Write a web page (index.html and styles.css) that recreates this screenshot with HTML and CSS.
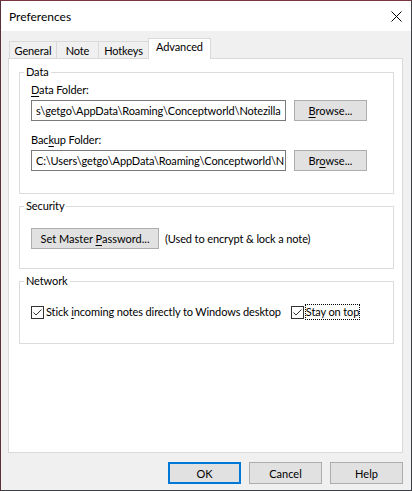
FILE: index.html
```html
<!DOCTYPE html>
<html>
<head>
  <meta charset="UTF-8" />
  <meta name="viewport" content="width=device-width, initial-scale=1" />
  <title>Preferences</title>
  <link rel="stylesheet" href="styles.css">
</head>
<body>
  <div class="window">
    <div class="titlebar">
      <span class="title">Preferences</span>
      <button class="close" title="Close">
        <svg width="11" height="11" viewBox="0 0 11 11">
          <path d="M0.5 0.5 L10.5 10.5 M10.5 0.5 L0.5 10.5" stroke="#000" stroke-width="1" fill="none" />
        </svg>
      </button>
    </div>

    <div class="client">
      <div class="tabs">
        <div class="tab" style="width: 48px">General</div>
        <div class="tab" style="width: 43px">Note</div>
        <div class="tab" style="width: 51px">Hotkeys</div>
        <div class="tab active" style="width: 63px">Advanced</div>
      </div>

      <div class="panel">
        <fieldset class="group data">
          <legend>Data</legend>
          <label class="field-label"><u>D</u>ata Folder:</label>
          <div class="row">
            <div class="field">s\getgo\AppData\Roaming\Conceptworld\Notezilla</div>
            <button class="btn"><u>B</u>rowse...</button>
          </div>
          <label class="field-label second">Bac<u>k</u>up Folder:</label>
          <div class="row">
            <div class="field">C:\Users\getgo\AppData\Roaming\Conceptworld\N</div>
            <button class="btn">Br<u>o</u>wse...</button>
          </div>
        </fieldset>

        <fieldset class="group security">
          <legend>Security</legend>
          <div class="row">
            <button class="btn wide">Set Master <u>P</u>assword...</button>
            <span class="hint">(Used to encrypt &amp; lock a note)</span>
          </div>
        </fieldset>

        <fieldset class="group network">
          <legend>Network</legend>
          <div class="checks">
            <label class="check">
              <span class="box">
                <svg width="11" height="11" viewBox="0 0 11 11">
                  <path d="M1.5 5.5 L4 8 L9.5 2.5" stroke="#333" stroke-width="1" fill="none" />
                </svg>
              </span>
              <span>Stick <u>i</u>ncoming notes directly to Windows desktop</span>
            </label>
            <label class="check">
              <span class="box">
                <svg width="11" height="11" viewBox="0 0 11 11">
                  <path d="M1.5 5.5 L4 8 L9.5 2.5" stroke="#333" stroke-width="1" fill="none" />
                </svg>
              </span>
              <span class="focus">Stay on top</span>
            </label>
          </div>
        </fieldset>
      </div>

      <div class="actions">
        <button class="btn default">OK</button>
        <button class="btn">Cancel</button>
        <button class="btn">Help</button>
      </div>
    </div>
  </div>
</body>
</html>
```

FILE: styles.css
```css
* {
  box-sizing: border-box;
}

body {
  margin: 0;
  font-family: Lato, "Liberation Sans", sans-serif;
  font-size: 11px;
  letter-spacing: -0.12px;
  color: #000;
}

u { text-decoration-thickness: 1px; text-underline-offset: 2px }

.window {
  width: 412px;
  height: 491px;
  border: 1px solid #3d3f45;
  border-top-color: #7a3440;
  border-left-color: #5a3038;
  background: #f0f0f0;
  display: flex;
  flex-direction: column;
}

.titlebar {
  height: 30px;
  background: #fff;
  display: flex;
  align-items: center;
  justify-content: space-between;
  padding-left: 8px;
}

.title {
  font-size: 12px;
  letter-spacing: 0;
  padding-top: 1px;
}

.close {
  width: 30px;
  height: 30px;
  border: 0;
  background: transparent;
  padding: 0;
  display: flex;
  align-items: center;
  justify-content: center;
}

.client {
  flex: 1;
  padding: 7px 8px 0 7px;
  display: flex;
  flex-direction: column;
}

/* tab strip */
.tabs {
  display: flex;
  align-items: flex-end;
  height: 20px;
  padding-left: 1px;
}

.tab {
  height: 17px;
  border: 1px solid #d9d9d9;
  border-bottom: 0;
  margin-right: -1px;
  background: #f0f0f0;
  text-align: center;
  line-height: 17px;
  white-space: nowrap;
}

.tab.active {
  height: 21px;
  margin-bottom: -1px;
  background: #fff;
  position: relative;
  z-index: 1;
  line-height: 16px;
}

.panel {
  height: 395px;
  background: #fff;
  border: 1px solid #d9d9d9;
  padding: 5px 8px 0 10px;
  display: flex;
  flex-direction: column;
  gap: 4px;
}

/* group boxes */
.group {
  margin: 0;
  border: 1px solid #dcdcdc;
  padding: 0 0 0 11px;
  min-width: 0;
}

.group legend {
  padding: 0 2px;
  margin-left: -7px;
  line-height: 16px;
}

.data { padding-bottom: 22px }
.security { padding-bottom: 19px }
.network { padding-bottom: 23px }

.field-label {
  display: block;
  line-height: 16px;
  margin-top: 2px;
}

.field-label.second { margin-top: 11px }

.row {
  display: flex;
  align-items: center;
  gap: 8px;
  margin-top: 2px;
}

.field {
  width: 255px;
  height: 21px;
  border: 1px solid #7a7a7a;
  background: #fff;
  padding: 0 4px;
  line-height: 19px;
  white-space: nowrap;
  overflow: hidden;
}

.btn {
  width: 73px;
  height: 21px;
  border: 1px solid #adadad;
  background: #e1e1e1;
  font: inherit;
  color: #000;
  padding: 0;
}

.btn.wide { width: 128px }

.btn.default {
  border: 2px solid #0078d7;
}

.security .row { margin-top: 14px; gap: 6px }

/* check boxes */
.checks {
  display: flex;
  align-items: center;
  gap: 10px;
  margin-top: 15px;
  line-height: 16px;
}

.check {
  display: flex;
  align-items: center;
  gap: 2px;
  white-space: nowrap;
}

.box {
  width: 13px;
  height: 13px;
  border: 1px solid #333;
  background: #fff;
  display: flex;
}

.focus {
  outline: 1px dotted #000;
  line-height: 14px;
}

.actions {
  display: flex;
  justify-content: flex-end;
  gap: 8px;
  margin-top: 9px;
}

.actions .btn { height: 22px }
```
